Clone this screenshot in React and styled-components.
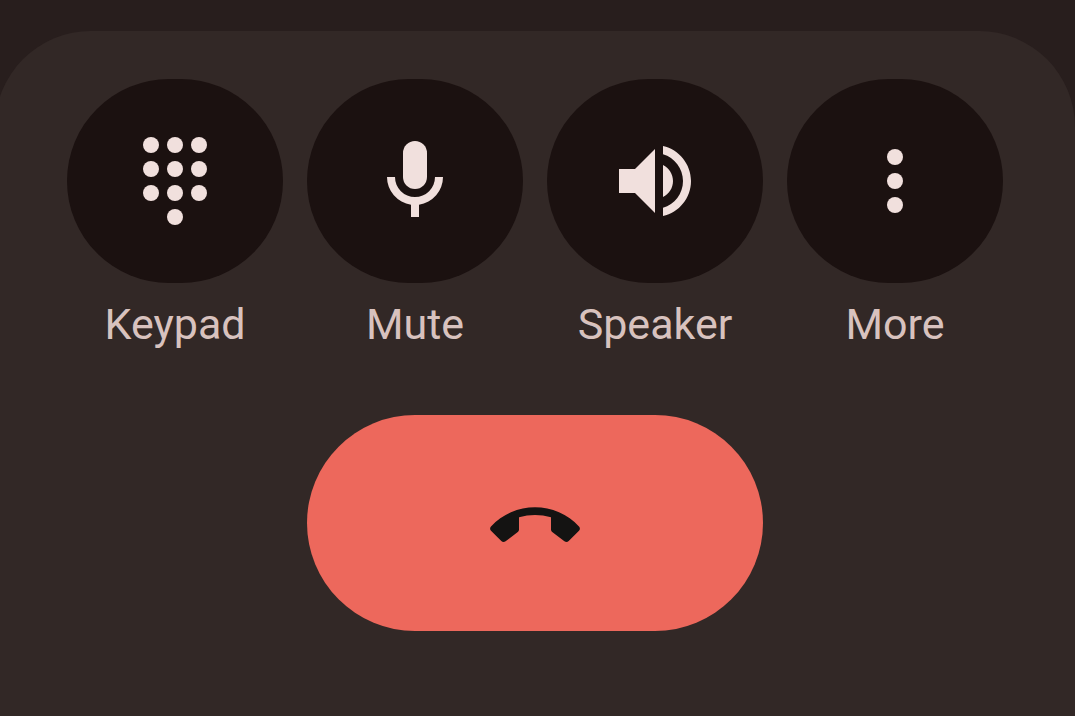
import React from "react";
import styled, { createGlobalStyle } from "styled-components";

const GlobalStyle = createGlobalStyle`
  * { box-sizing: border-box; }
  body {
    margin: 0;
    background: #281e1d;
    font-family: Roboto, "Liberation Sans", Arial, sans-serif;
    overflow-x: hidden;
  }
`;

const Screen = styled.main`
  display: flex;
  flex-direction: column;
  min-height: 100vh;
  padding-top: 31px;
`;

const Panel = styled.section`
  flex: 1;
  display: flex;
  flex-direction: column;
  align-items: center;
  gap: 66px;
  margin-left: -5px;
  padding: 48px 72px;
  background: #322826;
  border-radius: 96px 96px 0 0;
`;

const Controls = styled.div`
  display: grid;
  grid-template-columns: repeat(4, 1fr);
  gap: 24px;
  width: 100%;
`;

const Control = styled.button`
  display: flex;
  flex-direction: column;
  align-items: center;
  gap: 16px;
  padding: 0;
  border: 0;
  background: none;
  color: #d8c2be;
  font-family: inherit;
  font-size: 43px;
  line-height: 50px;
  cursor: pointer;
`;

const Disc = styled.span`
  display: flex;
  align-items: center;
  justify-content: center;
  width: 100%;
  height: 204px;
  border-radius: 102px;
  background: #1b1110;
  color: #f1e0dd;
`;

const EndCall = styled.button`
  display: flex;
  align-items: center;
  justify-content: center;
  width: 456px;
  max-width: 100%;
  height: 216px;
  padding: 0;
  border: 0;
  border-radius: 108px;
  background: #ed685c;
  color: #141312;
  cursor: pointer;
`;

const Icon = styled.svg`
  width: 96px;
  height: 96px;
  fill: currentColor;
`;

const keypadDots = [
  [6, 3], [12, 3], [18, 3],
  [6, 9], [12, 9], [18, 9],
  [6, 15], [12, 15], [18, 15],
  [12, 21],
];

const moreDots = [[12, 6], [12, 12], [12, 18]];

const dots = (points) =>
  points.map(([x, y]) => <circle key={`${x}-${y}`} cx={x} cy={y} r="2" />);

const controls = [
  { label: "Keypad", drawing: dots(keypadDots) },
  {
    label: "Mute",
    drawing: (
      <>
        <rect x="9" y="2" width="6" height="12" rx="3" />
        <path d="M5 11a7 7 0 0 0 6 6.92V21h2v-3.08A7 7 0 0 0 19 11h-2a5 5 0 0 1-10 0z" />
      </>
    ),
  },
  {
    label: "Speaker",
    drawing: (
      <path d="M3 9v6h4l5 5V4L7 9H3zm13.500 3c0-1.770-1.020-3.290-2.500-4.030v8.050c1.480-.73 2.500-2.250 2.500-4.020zM14 3.230v2.060c2.890.86 5 3.540 5 6.710s-2.110 5.850-5 6.710v2.060c4.010-.91 7-4.490 7-8.770s-2.990-7.860-7-8.770z" />
    ),
  },
  { label: "More", drawing: dots(moreDots) },
];

export default function App() {
  return (
    <>
      <GlobalStyle />
      <Screen>
        <Panel aria-label="Call controls">
          <Controls>
            {controls.map(({ label, drawing }) => (
              <Control key={label} type="button">
                <Disc>
                  <Icon viewBox="0 0 24 24" aria-hidden="true">{drawing}</Icon>
                </Disc>
                {label}
              </Control>
            ))}
          </Controls>
          <EndCall type="button" aria-label="End call">
            <Icon viewBox="0 0 96 96" aria-hidden="true">
              <path d="M4 51.500A60 60 0 0 1 92 51.500Q93.800 53.700 92 55.700L81.700 66Q79.700 67.700 77.400 66.200L65.200 57Q64 56 64 54.500V42.300Q56 40 48 40T32 42.300V54.500Q32 56 30.800 57L18.600 66.200Q16.300 67.700 14.300 66L4 55.700Q2.200 53.700 4 51.500Z" />
            </Icon>
          </EndCall>
        </Panel>
      </Screen>
    </>
  );
}
